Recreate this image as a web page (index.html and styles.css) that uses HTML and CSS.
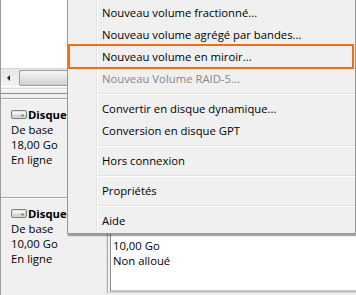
FILE: index.html
```html
<!DOCTYPE html>
<html lang="fr">

<head>
  <meta charset="UTF-8">
  <meta name="viewport" content="width=device-width, initial-scale=1.0">
  <title>Gestion des disques</title>
  <link rel="stylesheet" href="styles.css">
</head>

<body>
  <div class="console">
    <div class="volumes"></div>
    <div class="hscroll">
      <span class="scroll-arrow"></span>
      <span class="scroll-thumb"></span>
    </div>
    <div class="splitter"></div>

    <div class="disks">
      <div class="disk">
        <div class="disk-label">
          <div class="disk-name">
            <svg class="disk-icon" width="16" height="9" viewBox="0 0 16 9">
              <rect x="0.5" y="0.5" width="15" height="8" rx="1.5" fill="#d4d4d4" stroke="#7f7f7f"/>
              <rect x="1.5" y="1.5" width="13" height="3" fill="#f4f4f4"/>
              <rect x="10" y="4.5" width="3" height="2" fill="#3fbf3f"/>
            </svg>Disque 0
          </div>
          <div>De base</div>
          <div>18,00 Go</div>
          <div>En ligne</div>
        </div>
      </div>

      <div class="disk">
        <div class="disk-label">
          <div class="disk-name">
            <svg class="disk-icon" width="16" height="9" viewBox="0 0 16 9">
              <rect x="0.5" y="0.5" width="15" height="8" rx="1.5" fill="#d4d4d4" stroke="#7f7f7f"/>
              <rect x="1.5" y="1.5" width="13" height="3" fill="#f4f4f4"/>
              <rect x="10" y="4.5" width="3" height="2" fill="#3fbf3f"/>
            </svg>Disque 1
          </div>
          <div>De base</div>
          <div>10,00 Go</div>
          <div>En ligne</div>
        </div>
        <div class="partition">
          <div class="partition-body">
            <div>10,00 Go</div>
            <div>Non alloué</div>
          </div>
        </div>
      </div>
    </div>
  </div>

  <!-- menu contextuel, par-dessus la console -->
  <ul class="context-menu">
    <li class="item">Nouveau volume fractionné...</li>
    <li class="item">Nouveau volume agrégé par bandes...</li>
    <li class="item marked">Nouveau volume en miroir...</li>
    <li class="item disabled">Nouveau Volume RAID-5...</li>
    <li class="sep"></li>
    <li class="item">Convertir en disque dynamique...</li>
    <li class="item">Conversion en disque GPT</li>
    <li class="sep"></li>
    <li class="item">Hors connexion</li>
    <li class="sep"></li>
    <li class="item">Propriétés</li>
    <li class="sep"></li>
    <li class="item">Aide</li>
  </ul>
</body>

</html>
```

FILE: styles.css
```css
body {
  margin: 0;
  width: 356px;
  height: 295px;
  overflow: hidden;
  position: relative;
  background-color: #f0f0f0;
  font-family: 'Open Sans', 'Noto Sans', sans-serif;
  font-size: 11.3px;
  color: #000;
}

.console {
  height: 295px;
  border-left: 1px solid #9c9c9c;
}

.volumes {
  height: 68px;
  background-color: #fff;
  border-bottom: 1px solid #d6d6d6;
}

.hscroll {
  height: 17px;
  display: flex;
  align-items: center;
  gap: 2px;
  background: linear-gradient(#e6e6e6, #f3f3f3);
}

.scroll-arrow {
  width: 16px;
  display: flex;
  justify-content: center;
}

.scroll-arrow::before {
  content: '';
  border-top: 3px solid transparent;
  border-bottom: 3px solid transparent;
  border-right: 3px solid #202020;
  margin-right: 2px;
}

.scroll-thumb {
  flex: 1;
  height: 14px;
  border: 1px solid #9b9b9b;
  border-radius: 2px;
  background: linear-gradient(#f6f6f6, #e4e4e4 50%, #cfcfcf);
}

.splitter {
  height: 7px;
  border-top: 1px solid #fff;
  box-sizing: border-box;
  background: linear-gradient(#f0f0f0 1px, #d9d9d9 1px, #d9d9d9 2px, #fff 2px, #fff 3px, #f0f0f0 3px);
}

.disks {
  border-top: 1px solid #8d8d8d;
  padding-top: 4px;
}

.disk {
  height: 99px;
  box-sizing: border-box;
  display: flex;
  border-top: 1px solid #a3a3a3;
}

.disk-label {
  width: 106px;
  flex-shrink: 0;
  white-space: nowrap;
  padding: 8px 0 0 10px;
  box-sizing: border-box;
  line-height: 15px;
  border-right: 1px solid #dadada;
  box-shadow: inset 0 1px 0 #fff;
}

.disk-name {
  font-weight: bold;
  display: flex;
  align-items: center;
  gap: 1px;
}

.disk-icon {
  flex-shrink: 0;
}

.partition {
  flex: 1;
  margin: 2px 0 3px 0;
  padding-left: 2px;
  border-left: 1px solid #b4b4b4;
  border-bottom: 1px solid #d2d2d2;
}

.partition-body {
  height: 100%;
  box-sizing: border-box;
  background-color: #fff;
  border-left: 1px solid #8c8c8c;
  border-bottom: 2px solid #c4c4c4;
  padding: 38px 0 0 2px;
  line-height: 15px;
}

.context-menu {
  position: absolute;
  top: -1px;
  left: 67px;
  width: 289px;
  box-sizing: border-box;
  margin: 0;
  padding: 2px 0 1px;
  list-style: none;
  background-color: #f0f0f0;
  border: 1px solid #979797;
  box-shadow: 1px 2px 1px rgba(0, 0, 0, 0.35);
}

.context-menu::before {
  content: '';
  position: absolute;
  top: 0;
  bottom: 0;
  left: 28px;
  width: 1px;
  background-color: #e2e3e3;
  box-shadow: 1px 0 0 #fff;
}

.item {
  position: relative;
  height: 22px;
  line-height: 22px;
  padding-left: 34px;
  white-space: nowrap;
}

.item.disabled {
  color: #868686;
}

.item.marked::after {
  content: '';
  position: absolute;
  top: -2px;
  bottom: -1px;
  left: 0;
  right: 1px;
  border: 2px solid #f86b0e;
}

.sep {
  height: 8px;
  margin-left: 30px;
  background: linear-gradient(transparent 3px, #e0e0e0 3px, #e0e0e0 4px, #fff 4px, #fff 5px, transparent 5px);
}
```
